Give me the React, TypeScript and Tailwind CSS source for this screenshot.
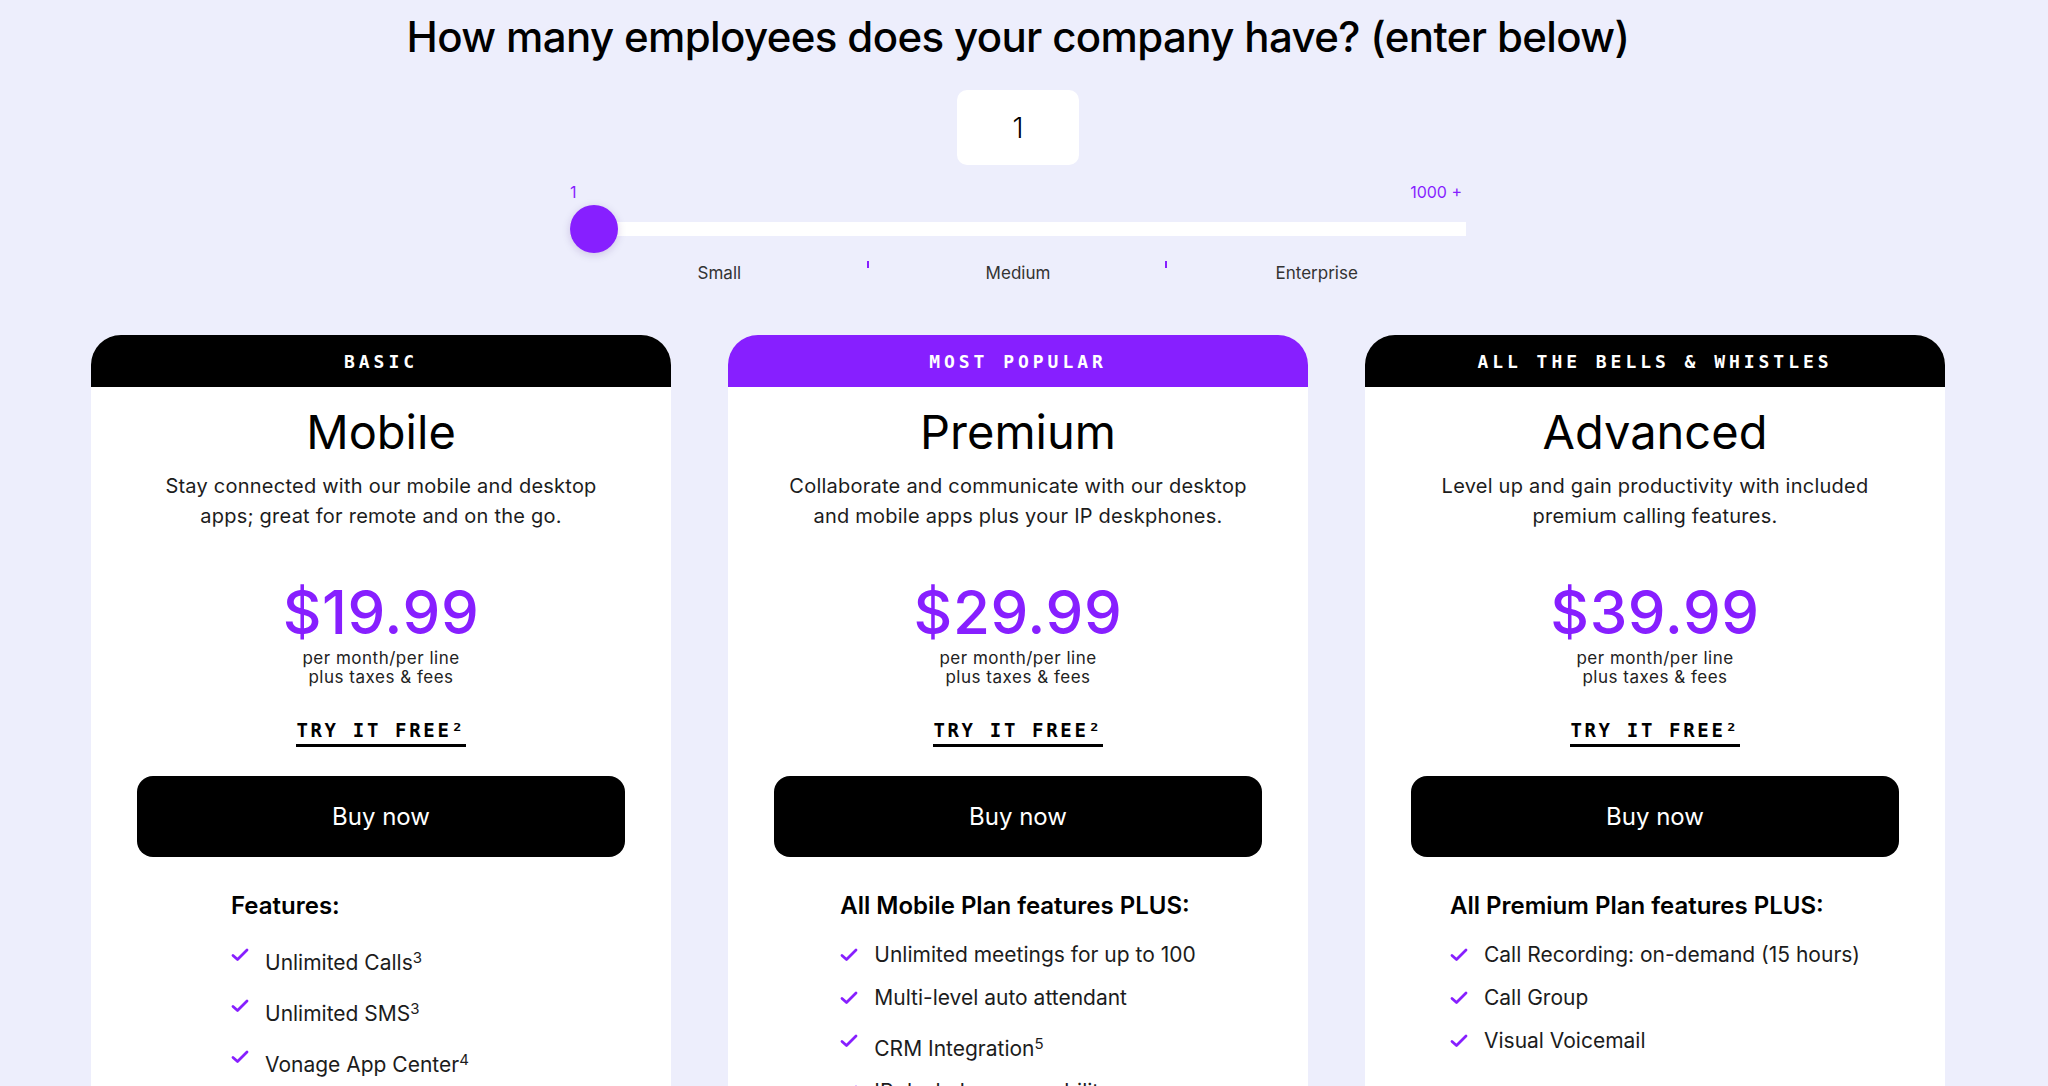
import React from 'react';

type Feature = { text: string; sup?: string };

const plans: {
  tag: string;
  dark: boolean;
  name: string;
  desc: [string, string];
  price: string;
  featTitle: string;
  listW: string;
  features: Feature[];
}[] = [
  {
    tag: 'BASIC',
    dark: true,
    name: 'Mobile',
    desc: ['Stay connected with our mobile and desktop', 'apps; great for remote and on the go.'],
    price: '$19.99',
    featTitle: 'Features:',
    listW: 'w-[300px]',
    features: [
      { text: 'Unlimited Calls', sup: '3' },
      { text: 'Unlimited SMS', sup: '3' },
      { text: 'Vonage App Center', sup: '4' },
    ],
  },
  {
    tag: 'MOST POPULAR',
    dark: false,
    name: 'Premium',
    desc: ['Collaborate and communicate with our desktop', 'and mobile apps plus your IP deskphones.'],
    price: '$29.99',
    featTitle: 'All Mobile Plan features PLUS:',
    listW: 'w-fit',
    features: [
      { text: 'Unlimited meetings for up to 100' },
      { text: 'Multi-level auto attendant' },
      { text: 'CRM Integration', sup: '5' },
      { text: 'IP deskphone capability' },
    ],
  },
  {
    tag: 'ALL THE BELLS & WHISTLES',
    dark: true,
    name: 'Advanced',
    desc: ['Level up and gain productivity with included', 'premium calling features.'],
    price: '$39.99',
    featTitle: 'All Premium Plan features PLUS:',
    listW: 'w-fit',
    features: [
      { text: 'Call Recording: on-demand (15 hours)' },
      { text: 'Call Group' },
      { text: 'Visual Voicemail' },
    ],
  },
];

function Check() {
  return (
    <svg width="18" height="14" viewBox="0 0 18 14" className="mt-[8px] shrink-0">
      <path d="M2 7.5 L6.5 11.5 L16 2" fill="none" stroke="#871fff" strokeWidth="2.8" strokeLinecap="round" strokeLinejoin="round" />
    </svg>
  );
}

export default function App() {
  return (
    <div className="h-[1086px] overflow-hidden bg-[#edeefc] font-['Inter',sans-serif] text-black">
      <div className="flex flex-col items-center pr-[12px]">
        <h1 className="pt-[12px] text-[42px] leading-[50px] font-medium tracking-[-0.015em]">
          How many employees does your company have? (enter below)
        </h1>

        <div className="mt-[28px] flex h-[75px] w-[122px] items-center justify-center rounded-[10px] bg-white text-[28px] font-light">
          1
        </div>

        {/* slider */}
        <div className="mt-[17px] w-[896px]">
          <div className="flex justify-between text-[16px] leading-[20px] text-[#871fff]">
            <span>1</span>
            <span className="pr-[4px]">1000 +</span>
          </div>
          <div className="relative mt-[3px] flex h-[48px] items-center">
            <div className="h-[14px] w-full bg-white" />
            <div className="absolute left-0 top-0 size-[48px] rounded-full bg-[#871fff] shadow-[0_2px_8px_rgba(60,0,120,0.18)]" />
          </div>
          <div className="mt-[10px] grid grid-cols-3 text-[17px] leading-[20px] text-[#333]">
            <div className="relative text-center">
              Small
              <span className="absolute right-0 top-[-2px] h-[7px] w-[2px] bg-[#871fff]" />
            </div>
            <div className="relative text-center">
              Medium
              <span className="absolute right-0 top-[-2px] h-[7px] w-[2px] bg-[#871fff]" />
            </div>
            <div className="text-center">Enterprise</div>
          </div>
        </div>

        {/* cards */}
        <div className="mt-[52px] flex gap-[57px]">
          {plans.map((p) => (
            <div key={p.name} className="flex w-[580px] flex-col overflow-hidden rounded-t-[30px] bg-white pb-[60px]">
              <div
                className={
                  "flex h-[52px] items-center justify-center font-['DejaVu_Sans_Mono',monospace] text-[18px] font-bold tracking-[0.22em] text-white " +
                  (p.dark ? 'bg-black' : 'bg-[#871fff]')
                }
              >
                {p.tag}
              </div>
              <div className="mt-[19px] text-center text-[47px] leading-[52px] font-normal">{p.name}</div>
              <p className="mt-[13px] text-center text-[20px] leading-[30px] tracking-[0.012em] text-[#1c1c1c]">
                {p.desc[0]}
                <br />
                {p.desc[1]}
              </p>
              <div className="mt-[49px] text-center text-[60px] leading-[64px] font-medium tracking-[0.01em] text-[#871fff]">
                {p.price}
              </div>
              <div className="mt-[5px] text-center text-[17px] leading-[19px] tracking-[0.03em] text-[#222]">
                per month/per line
                <br />
                plus taxes &amp; fees
              </div>
              <div className="mt-[31px] flex justify-center">
                <span className="border-b-[3px] border-black pb-[2px] font-['DejaVu_Sans_Mono',monospace] text-[19px] leading-[24px] font-bold tracking-[0.14em]">
                  TRY IT FREE²
                </span>
              </div>
              <button className="mx-[46px] mt-[29px] h-[81px] rounded-[16px] bg-black text-[24px] text-white">
                Buy now
              </button>
              <div className={'mx-auto mt-[34px] ' + p.listW}>
                <div className="text-[24px] leading-[30px] font-semibold">{p.featTitle}</div>
                <ul className="mt-[19px] flex flex-col gap-[13px]">
                  {p.features.map((f) => (
                    <li key={f.text} className="flex items-start gap-[16px]">
                      <Check />
                      <span className={'text-[21px] leading-[30px] text-[#1c1c1c] ' + (f.sup ? 'pt-[8px]' : '')}>
                        {f.text}
                        {f.sup && <sup className="text-[15px]">{f.sup}</sup>}
                      </span>
                    </li>
                  ))}
                </ul>
              </div>
            </div>
          ))}
        </div>
      </div>
    </div>
  );
}
